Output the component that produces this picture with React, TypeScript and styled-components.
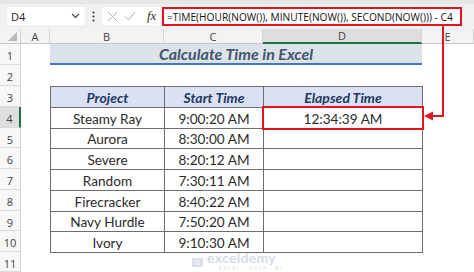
import styled, { createGlobalStyle } from "styled-components";

const GlobalStyle = createGlobalStyle`
  html, body { margin: 0; padding: 0; background: #fff; }
  body { overflow: hidden; }
`;

const Screen = styled.div`
  position: relative;
  width: 474px;
  height: 272px;
  overflow: hidden;
  background: #fff;
  font-family: "Open Sans", "Noto Sans", sans-serif;
`;

const FormulaBar = styled.div`
  height: 29px;
  box-sizing: border-box;
  padding: 3px 0 0 7px;
  display: flex;
  align-items: flex-start;
  background: #f1f1f1;
  border-top: 4px solid #e6e6e6;
`;

const NameBox = styled.div`
  width: 78px;
  height: 18px;
  box-sizing: border-box;
  background: #fff;
  border-radius: 3px;
  display: flex;
  align-items: center;
  justify-content: space-between;
  padding: 0 5px 0 4px;
  font-size: 11px;
  color: #222;
`;

const Dots = styled.div`
  width: 17px;
  height: 18px;
  display: flex;
  align-items: center;
  justify-content: center;
`;

const FxBox = styled.div`
  width: 58px;
  height: 18px;
  box-sizing: border-box;
  background: #fff;
  border-radius: 3px;
  display: flex;
  align-items: center;
  gap: 6px;
  padding-left: 5px;
`;

const Fx = styled.span`
  font-family: "Liberation Serif", serif;
  font-style: italic;
  font-size: 13px;
  color: #333;
  margin-left: 5px;
`;

const FormulaBox = styled.div`
  margin-left: 2px;
  width: 300px;
  height: 19px;
  box-sizing: border-box;
  background: #fff;
  border: 2px solid #e3141e;
  display: flex;
  align-items: center;
  padding-left: 3px;
  font-size: 10.2px;
  color: #111;
  white-space: nowrap;
`;

const Sheet = styled.div`
  display: grid;
  grid-template-columns: 21px 29px 114px 99px 159px 1fr;
  grid-template-rows: 15px 21px 21px 21px 21px 20px 21px 21px 21px 20px 21px 1fr;
  height: 243px;
`;

const Corner = styled.div`
  background: #f3f3f3;
  border-right: 1px solid #d4d4d4;
  border-bottom: 1px solid #c8c8c8;
  display: flex;
  align-items: flex-end;
  justify-content: flex-end;
  padding: 0 3px 2px 0;
`;

const ColHead = styled.div<{ $selected?: boolean }>`
  background: ${(p) => (p.$selected ? "#dedede" : "#f3f3f3")};
  border-right: 1px solid #d4d4d4;
  border-bottom: ${(p) => (p.$selected ? "2px solid #1e7145" : "1px solid #c8c8c8")};
  display: flex;
  align-items: center;
  justify-content: center;
  font-size: 11px;
  color: #444;
`;

const RowHead = styled.div<{ $selected?: boolean }>`
  grid-column: 1;
  background: ${(p) => (p.$selected ? "#dedede" : "#f7f7f7")};
  border-right: ${(p) => (p.$selected ? "2px solid #1e7145" : "1px solid #d4d4d4")};
  border-bottom: 1px solid #dadada;
  display: flex;
  align-items: center;
  justify-content: center;
  padding-top: 3px;
  box-sizing: border-box;
  font-size: 11px;
  color: #444;
`;

const Title = styled.div`
  grid-column: 3 / 6;
  grid-row: 2;
  background: #dce2ea;
  border-bottom: 2px solid #4472c4;
  display: flex;
  align-items: center;
  justify-content: center;
  font-family: "Lato", sans-serif;
  font-weight: 700;
  font-style: italic;
  font-size: 16px;
  color: #44546a;
`;

const Table = styled.div`
  grid-column: 3 / 6;
  grid-row: 4 / 12;
  align-self: start;
  display: grid;
  grid-template-columns: 113px 98px 158px;
  grid-template-rows: 20px 20px 19px 20px 20px 20px 19px 20px;
  gap: 1px;
  padding: 1px;
  background: #6e6e6e;
  width: max-content;
  font-family: "Lato", sans-serif;
`;

const HeadCell = styled.div`
  background: #d9e1f2;
  display: flex;
  align-items: center;
  justify-content: center;
  font-weight: 700;
  font-style: italic;
  font-size: 14px;
  color: #1f3864;
`;

const Cell = styled.div<{ $marked?: boolean }>`
  position: relative;
  background: #fff;
  display: flex;
  align-items: flex-end;
  justify-content: center;
  padding-bottom: 1px;
  box-sizing: border-box;
  font-size: 13.6px;
  color: #2b2b2b;
  ${(p) =>
    p.$marked &&
    `outline: 2px solid #e3141e; outline-offset: 0px; z-index: 1;`}
`;

const Connector = styled.svg`
  position: absolute;
  left: 420px;
  top: 24px;
`;

const Watermark = styled.div`
  position: absolute;
  left: 192px;
  top: 252px;
  display: flex;
  align-items: center;
  gap: 3px;
  opacity: 0.5;
`;

const MarkText = styled.div`
  display: flex;
  flex-direction: column;
  gap: 2px;
`;

const MarkName = styled.span`
  font-family: "Lato", sans-serif;
  font-weight: 700;
  font-size: 14px;
  line-height: 12px;
  color: #a9b8d3;
  letter-spacing: 0.3px;
`;

const MarkSub = styled.span`
  font-family: "Lato", sans-serif;
  font-size: 5px;
  line-height: 5px;
  color: #b9c3d6;
  letter-spacing: 1.4px;
  margin-left: 12px;
`;

const rows = [
  ["Steamy Ray", "9:00:20 AM", "12:34:39 AM"],
  ["Aurora", "8:30:00 AM", ""],
  ["Severe", "8:20:12 AM", ""],
  ["Random", "7:30:11 AM", ""],
  ["Firecracker", "8:40:22 AM", ""],
  ["Navy Hurdle", "7:50:20 AM", ""],
  ["Ivory", "9:10:30 AM", ""],
];

const columns = ["A", "B", "C", "D", "E"];

export default function App() {
  return (
    <Screen>
      <GlobalStyle />
      <FormulaBar>
        <NameBox>
          <span>D4</span>
          <svg width="9" height="6" viewBox="0 0 9 6">
            <path d="M1 1l3.5 3.5L8 1" fill="none" stroke="#444" strokeWidth="1.1" />
          </svg>
        </NameBox>
        <Dots>
          <svg width="3" height="11" viewBox="0 0 3 11">
            <circle cx="1.5" cy="1.5" r="1.1" fill="#444" />
            <circle cx="1.5" cy="5.5" r="1.1" fill="#444" />
            <circle cx="1.5" cy="9.5" r="1.1" fill="#444" />
          </svg>
        </Dots>
        <FxBox>
          <svg width="11" height="11" viewBox="0 0 11 11">
            <path d="M1 1l9 9M10 1l-9 9" stroke="#b0b0b0" strokeWidth="1" />
          </svg>
          <svg width="12" height="10" viewBox="0 0 12 10">
            <path d="M1 5.5l3.5 3.5L11 1" fill="none" stroke="#b0b0b0" strokeWidth="1" />
          </svg>
          <Fx>fx</Fx>
        </FxBox>
        <FormulaBox>=TIME(HOUR(NOW()), MINUTE(NOW()), SECOND(NOW())) - C4</FormulaBox>
      </FormulaBar>

      <Sheet>
        <Corner>
          <svg width="9" height="9" viewBox="0 0 9 9">
            <path d="M9 0V9H0z" fill="#b7b7b7" />
          </svg>
        </Corner>
        {columns.map((c) => (
          <ColHead key={c} $selected={c === "D"}>
            {c}
          </ColHead>
        ))}
        {Array.from({ length: 11 }, (_, i) => (
          <RowHead key={i} style={{ gridRow: i + 2 }} $selected={i === 3}>
            {i + 1}
          </RowHead>
        ))}
        <Title>Calculate Time in Excel</Title>
        <Table>
          <HeadCell>Project</HeadCell>
          <HeadCell>Start Time</HeadCell>
          <HeadCell>Elapsed Time</HeadCell>
          {rows.flatMap((r, i) => [
            <Cell key={`a${i}`}>{r[0]}</Cell>,
            <Cell key={`b${i}`}>{r[1]}</Cell>,
            <Cell key={`c${i}`} $marked={i === 0}>
              {r[2]}
            </Cell>,
          ])}
        </Table>
      </Sheet>

      <Connector width="30" height="100" viewBox="0 0 30 100">
        <path d="M23 1V92H12" fill="none" stroke="#e3141e" strokeWidth="2" />
        <path d="M4 92l9-4.5v9z" fill="#e3141e" />
      </Connector>

      <Watermark>
        <svg width="12" height="12" viewBox="0 0 12 12">
          <rect x="0" y="2" width="11" height="9" rx="1" fill="#b4c2db" />
          <path d="M3 5h5M3 8h5" stroke="#fff" strokeWidth="1" />
        </svg>
        <MarkText>
          <MarkName>exceldemy</MarkName>
          <MarkSub>EXCEL · DATA · BI</MarkSub>
        </MarkText>
      </Watermark>
    </Screen>
  );
}
